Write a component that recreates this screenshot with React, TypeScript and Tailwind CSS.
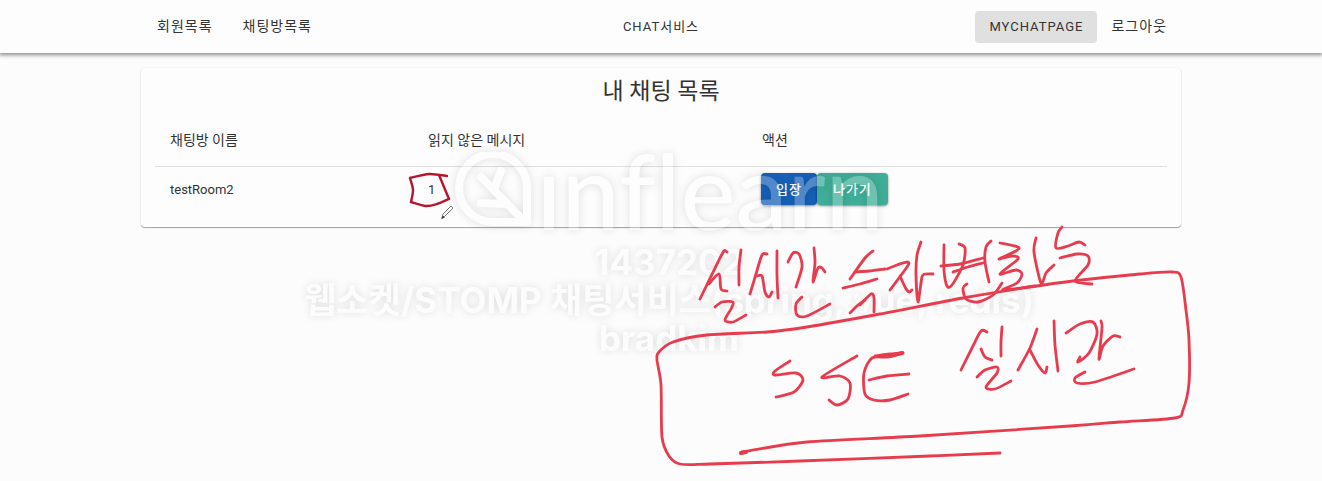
import type { ReactNode } from 'react';

type Point = [number, number];

interface Room {
  id: number;
  name: string;
  unread: number;
}

const rooms: Room[] = [{ id: 1, name: 'testRoom2', unread: 1 }];

// Freehand pen strokes, each one a list of points
const penStrokes: Point[][] = [
  // first line
  [[727, 252], [724, 251], [718, 262], [700, 299]],
  [[709, 284], [719, 274], [721, 289], [727, 291]],
  [[741, 250], [739, 267], [739, 285]],
  [[715, 307], [722, 302], [733, 302], [731, 309], [725, 320], [733, 322], [746, 315]],
  [[767, 254], [762, 255], [756, 274], [750, 294]],
  [[757, 276], [762, 276], [765, 292], [769, 297], [772, 292]],
  [[777, 251], [777, 275], [778, 298]],
  [[788, 262], [793, 253], [799, 254], [802, 267], [796, 287]],
  [[814, 248], [815, 263], [813, 282], [818, 268], [822, 268], [825, 272]],
  [[802, 297], [796, 304], [797, 315], [807, 316], [830, 304]],
  [[873, 251], [865, 258], [850, 279]],
  [[855, 272], [869, 271], [885, 269]],
  [[843, 288], [860, 284], [877, 279]],
  [[850, 313], [858, 305], [865, 300]],
  [[860, 305], [871, 294], [874, 298], [874, 312]],
  [[887, 269], [897, 265], [908, 262], [907, 267], [890, 290]],
  [[900, 276], [905, 287], [909, 292], [912, 290]],
  [[921, 242], [917, 255], [916, 275], [918, 302], [922, 277], [926, 274], [933, 274]],
  [[944, 245], [944, 270], [947, 286], [952, 285], [963, 265], [965, 248], [959, 244]],
  [[941, 266], [960, 264], [983, 258]],
  [[953, 272], [968, 267], [983, 263]],
  [[991, 241], [986, 247], [985, 262], [989, 282]],
  [[967, 284], [963, 288], [966, 299], [978, 302], [993, 295], [1002, 283]],
  [[1000, 243], [1018, 247], [1016, 251], [999, 259], [1012, 256], [1018, 259], [1000, 274], [1016, 270], [1022, 274], [1017, 283], [1003, 290], [1035, 286]],
  [[1036, 238], [1034, 252], [1041, 283], [1046, 273], [1054, 265]],
  [[1062, 227], [1058, 233], [1056, 248], [1068, 246], [1079, 242], [1085, 245]],
  [[1060, 258], [1077, 254], [1088, 256], [1088, 265], [1075, 281], [1092, 284]],
  // second line
  [[790, 361], [775, 371], [775, 375], [796, 373], [803, 380], [794, 392], [776, 397]],
  [[857, 356], [822, 377], [840, 376], [850, 383], [848, 399], [837, 405], [829, 400]],
  [[903, 353], [888, 357], [872, 358], [864, 373], [865, 394], [874, 400], [890, 400], [908, 394]],
  [[875, 356], [890, 354], [903, 353]],
  [[869, 380], [887, 376], [909, 374]],
  [[987, 332], [981, 331], [972, 348], [961, 370]],
  [[981, 349], [985, 357], [992, 360]],
  [[1002, 327], [1001, 342], [1001, 356]],
  [[977, 377], [985, 370], [997, 367], [997, 373], [986, 387], [995, 389], [1011, 381]],
  [[1037, 329], [1030, 348], [1018, 370]],
  [[1030, 350], [1038, 365], [1045, 373], [1047, 367]],
  [[1054, 321], [1055, 345], [1058, 371]],
  [[1066, 333], [1080, 324], [1093, 322], [1097, 334], [1089, 353], [1078, 362], [1080, 357]],
  [[1101, 321], [1102, 328], [1099, 359], [1103, 346], [1113, 336], [1120, 337]],
  [[1085, 372], [1075, 378], [1077, 383], [1095, 382], [1134, 369]],
  // underline and the frame around the second line
  [[1000, 453], [930, 456], [800, 461], [710, 464], [680, 464], [669, 456], [662, 437], [661, 385], [657, 360], [659, 352], [673, 342], [707, 335], [767, 332], [807, 327], [880, 314], [963, 298], [1030, 287], [1073, 281], [1140, 274], [1172, 272], [1181, 277], [1186, 310], [1189, 340], [1189, 383], [1183, 410], [1175, 418], [1120, 422], [1070, 426], [920, 436], [807, 442], [742, 452]],
];

const markStrokes: Point[][] = [
  [[410, 178], [429, 174], [447, 176]],
  [[410, 178], [413, 190], [411, 202]],
  [[411, 202], [426, 206], [437, 204], [449, 199]],
  [[449, 199], [444, 187], [439, 175]],
];

// Catmull-Rom spline through the points
function toPath(points: Point[]) {
  let d = `M${points[0][0]} ${points[0][1]}`;
  for (let i = 0; i < points.length - 1; i++) {
    const p0 = points[i - 1] ?? points[i];
    const p1 = points[i];
    const p2 = points[i + 1];
    const p3 = points[i + 2] ?? p2;
    d += ` C${p1[0] + (p2[0] - p0[0]) / 7} ${p1[1] + (p2[1] - p0[1]) / 7} ${p2[0] - (p3[0] - p1[0]) / 7} ${p2[1] - (p3[1] - p1[1]) / 7} ${p2[0]} ${p2[1]}`;
  }
  return d;
}

interface NavButtonProps {
  active?: boolean;
  latin?: boolean;
  children: ReactNode;
}

function NavButton({ active, latin, children }: NavButtonProps) {
  return (
    <button
      type="button"
      className={`h-8 rounded px-[14px] tracking-[1px] whitespace-nowrap ${
        latin ? 'text-[13px]' : 'text-[14px]'
      } ${active ? 'bg-[#e0e0e1]' : ''}`}
    >
      {children}
    </button>
  );
}

function Header() {
  return (
    <header className="bg-[#fdfdfd] shadow-[0_1px_4px_1px_rgba(0,0,0,0.45)]">
      <nav className="mx-auto grid h-[53px] max-w-[1040px] grid-cols-3 items-center">
        <div className="flex gap-0.5 pl-0.5">
          <NavButton>회원목록</NavButton>
          <NavButton>채팅방목록</NavButton>
        </div>
        <div className="flex justify-center">
          <NavButton latin>CHAT서비스</NavButton>
        </div>
        <div className="flex justify-end">
          <NavButton active latin>MYCHATPAGE</NavButton>
          <NavButton>로그아웃</NavButton>
        </div>
      </nav>
    </header>
  );
}

function ChatListCard() {
  return (
    <section className="mx-auto mt-[15px] max-w-[1040px] rounded bg-[#fdfdfd] px-[14px] pb-[15px] shadow-[0_1px_1px_rgba(0,0,0,0.35),0_0_2px_rgba(0,0,0,0.08)]">
      <h1 className="pt-2 text-center text-[23px] leading-8">내 채팅 목록</h1>
      <table className="mt-2 w-full table-fixed text-left text-[13px]">
        <thead>
          <tr className="h-[50px] border-b border-[#dedede] text-[14px]">
            <th className="w-[25.5%] px-[15px] font-normal">채팅방 이름</th>
            <th className="w-[33%] px-[15px] font-normal">읽지 않은 메시지</th>
            <th className="px-[15px] font-normal">액션</th>
          </tr>
        </thead>
        <tbody>
          {rooms.map((room) => (
            <tr key={room.id} className="h-[46px]">
              <td className="px-[15px]">{room.name}</td>
              <td className="px-[15px]">{room.unread}</td>
              <td className="px-[14px]">
                <div className="flex font-medium tracking-[1px] text-white">
                  <button type="button" className="h-8 rounded bg-[#1560b8] px-[15px] shadow-sm shadow-black/40">
                    입장
                  </button>
                  <button type="button" className="h-8 rounded bg-[#3fae98] px-4 shadow-sm shadow-black/40">
                    나가기
                  </button>
                </div>
              </td>
            </tr>
          ))}
        </tbody>
      </table>
    </section>
  );
}

function Watermark() {
  return (
    <div className="pointer-events-none absolute inset-x-0 top-[152px] flex flex-col items-center pl-4 opacity-25">
      <div className="flex h-[91px] items-start gap-1 drop-shadow-[0_0_5px_rgba(0,0,0,0.5)]">
        <svg width="78" height="80" viewBox="455 152 78 80" fill="none" stroke="white" strokeWidth="8">
          <path d="M528 222V190A34 34 0 1 0 494 222Z" strokeLinejoin="round" />
          <path d="M482 177L525 221M502 171L495 189M482 203L508 204" strokeLinecap="round" />
        </svg>
        <span className="font-['Lato'] text-[104px] leading-[76px] font-medium text-white [font-variant-ligatures:none]">
          ınflearn
        </span>
      </div>
      <div className="text-center font-['Inter','Noto_Sans_CJK_KR',sans-serif] text-[35px] leading-[38px] font-bold whitespace-nowrap text-white [text-shadow:0_0_8px_rgba(0,0,0,0.5)]">
        <p>1437202</p>
        <p>웹소켓/STOMP 채팅서비스(spring, vue, redis)</p>
        <p>bradkim</p>
      </div>
    </div>
  );
}

function Annotations() {
  return (
    <svg
      className="pointer-events-none absolute top-0 left-1/2 -translate-x-1/2"
      width="1322"
      height="481"
      viewBox="0 0 1322 481"
      fill="none"
      strokeLinecap="round"
      strokeLinejoin="round"
    >
      <g stroke="#e83b4d" strokeWidth="2.8">
        {penStrokes.map((points, i) => (
          <path key={i} d={toPath(points)} />
        ))}
        <path d="M741 453L746 452M890 356L902 353" strokeWidth="4" />
      </g>
      <g stroke="#b5152f" strokeWidth="2.4">
        {markStrokes.map((points, i) => (
          <path key={i} d={toPath(points)} />
        ))}
      </g>
      {/* Pencil cursor */}
      <path d="M442 218L443 214L451 206L453 208L445 216Z" fill="white" stroke="#777" />
      <path d="M442 218L443 216L444 217Z" fill="#333" stroke="#444" />
    </svg>
  );
}

export default function App() {
  return (
    <div className="relative min-h-screen overflow-hidden bg-[#fcfcfc] font-['Roboto','Noto_Sans_CJK_KR',sans-serif] text-[#333333]">
      <Header />
      <main>
        <ChatListCard />
      </main>
      <Watermark />
      <Annotations />
    </div>
  );
}
